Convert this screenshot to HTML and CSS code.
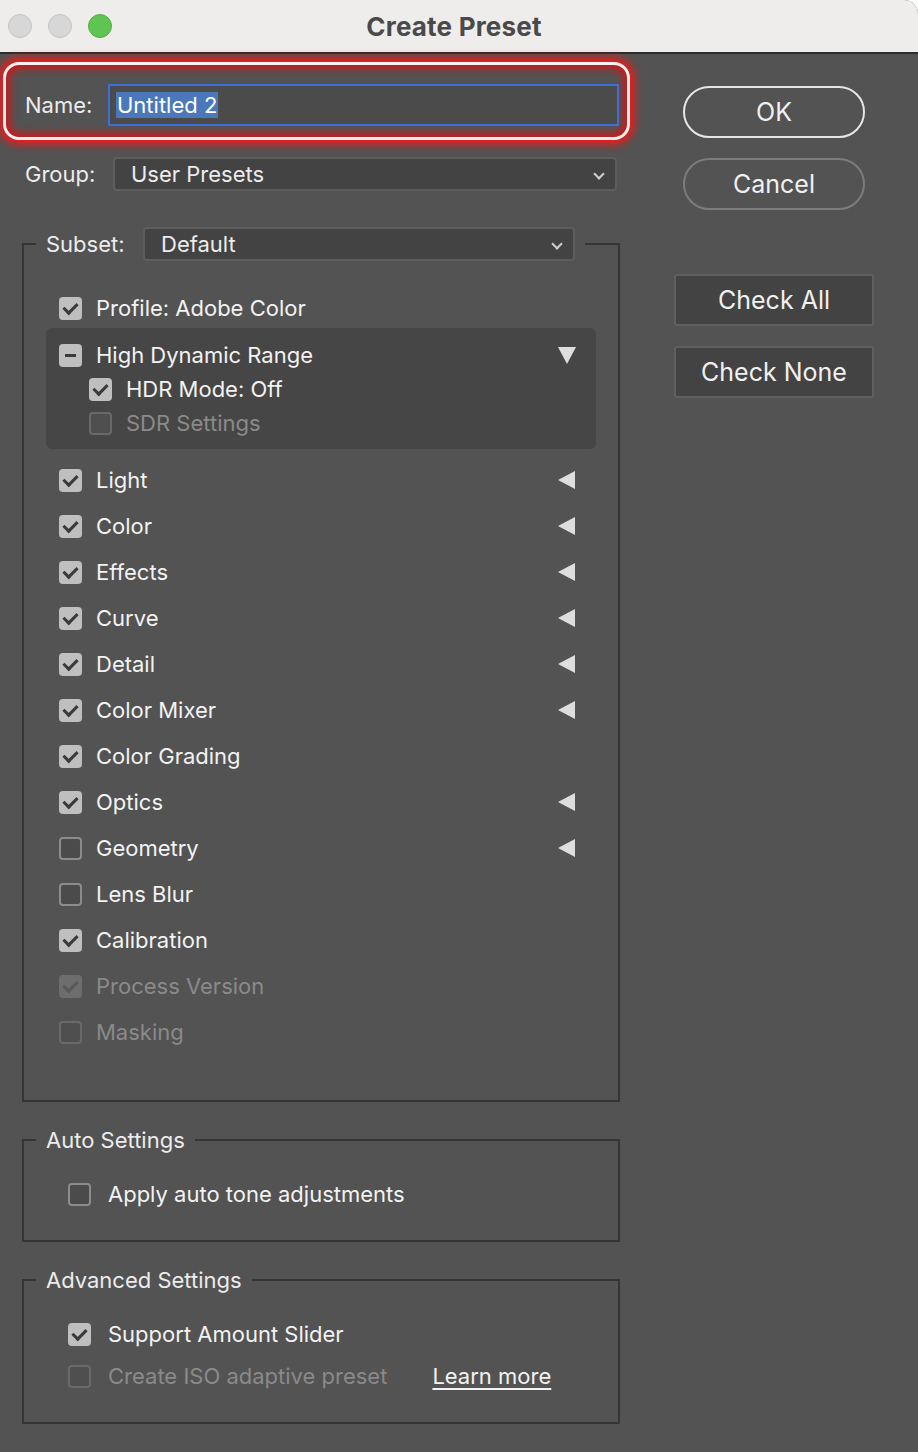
FILE: index.html
```html
<!DOCTYPE html>
<html lang="en">
<head>
    <meta charset="UTF-8">
    <title>Create Preset</title>
    <link rel="stylesheet" href="styles.css">
</head>
<body>
<div class="window">
    <div class="titlebar">
        <div class="lights">
            <span class="light"></span>
            <span class="light"></span>
            <span class="light green"></span>
        </div>
        <div class="title">Create Preset</div>
    </div>

    <div class="content">
        <div class="main">
            <div class="name-row">
                <span class="label name-label">Name:</span>
                <div class="name-input"><span class="selected">Untitled 2</span></div>
            </div>

            <div class="group-row">
                <span class="label group-label">Group:</span>
                <div class="select group-select">User Presets<span class="chevron"></span></div>
            </div>

            <fieldset class="box subset">
                <legend>
                    <span class="label subset-label">Subset:</span>
                    <div class="select subset-select">Default<span class="chevron"></span></div>
                </legend>
                <div class="list">
                    <div class="row first"><span class="cb on"></span>Profile: Adobe Color</div>
                    <div class="hdr">
                        <div class="row"><span class="cb mixed"></span>High Dynamic Range<span class="tri down"></span></div>
                        <div class="row sub"><span class="cb on"></span>HDR Mode: Off</div>
                        <div class="row sub off"><span class="cb"></span>SDR Settings</div>
                    </div>
                    <div class="rows">
                        <div class="row"><span class="cb on"></span>Light<span class="tri"></span></div>
                        <div class="row"><span class="cb on"></span>Color<span class="tri"></span></div>
                        <div class="row"><span class="cb on"></span>Effects<span class="tri"></span></div>
                        <div class="row"><span class="cb on"></span>Curve<span class="tri"></span></div>
                        <div class="row"><span class="cb on"></span>Detail<span class="tri"></span></div>
                        <div class="row"><span class="cb on"></span>Color Mixer<span class="tri"></span></div>
                        <div class="row"><span class="cb on"></span>Color Grading</div>
                        <div class="row"><span class="cb on"></span>Optics<span class="tri"></span></div>
                        <div class="row"><span class="cb"></span>Geometry<span class="tri"></span></div>
                        <div class="row"><span class="cb"></span>Lens Blur</div>
                        <div class="row"><span class="cb on"></span>Calibration</div>
                        <div class="row off"><span class="cb on"></span>Process Version</div>
                        <div class="row off"><span class="cb"></span>Masking</div>
                    </div>
                </div>
            </fieldset>

            <fieldset class="box auto">
                <legend>Auto Settings</legend>
                <div class="opts">
                    <div class="opt"><span class="cb"></span>Apply auto tone adjustments</div>
                </div>
            </fieldset>

            <fieldset class="box advanced">
                <legend>Advanced Settings</legend>
                <div class="opts">
                    <div class="opt"><span class="cb on"></span>Support Amount Slider</div>
                    <div class="opt off"><span class="cb"></span>Create ISO adaptive preset<a class="learn" href="#">Learn more</a></div>
                </div>
            </fieldset>
        </div>

        <div class="side">
            <button class="pill ok">OK</button>
            <button class="pill cancel">Cancel</button>
            <button class="square check-all">Check All</button>
            <button class="square">Check None</button>
        </div>
    </div>
</div>
</body>
</html>
```

FILE: styles.css
```css
body {
    margin: 0;
    background: #ffffff;
    font-family: Inter, "Noto Sans", sans-serif;
}
.window {
    width: 918px;
    height: 1452px;
    background: #535353;
    border-top-right-radius: 14px;
    overflow: hidden;
    color: #f0f0f0;
}
.titlebar {
    height: 52px;
    background: #efedeb;
    border-bottom: 2px solid #2c2c2c;
    display: flex;
    align-items: center;
}
.lights {
    display: flex;
    gap: 16px;
    padding-left: 8px;
}
.light {
    width: 22px;
    height: 22px;
    border-radius: 50%;
    background: #d7d7d7;
    border: 1px solid #c2c2c2;
}
.light.green {
    background: #5fc452;
    border-color: #52ad46;
}
.title {
    flex: 1;
    text-align: center;
    padding-right: 122px;
    font-size: 26px;
    font-weight: 700;
    letter-spacing: 0.2px;
    color: #4a4a4a;
}
.content {
    display: flex;
}
.main {
    width: 640px;
}
.label {
    flex: none;
    font-size: 22px;
    color: #ececec;
}

/* name row (highlighted) */
.name-row {
    box-sizing: border-box;
    margin: 8px 0 0 3px;
    width: 627px;
    height: 78px;
    border: 3px solid #fbeeee;
    border-radius: 16px;
    box-shadow: 0 0 9px 4px #ff1414, inset 0 0 9px 3px #e01010;
    display: flex;
    align-items: center;
    padding: 8px 0 0 19px;
}
.name-label {
    width: 83px;
}
.name-input {
    box-sizing: border-box;
    width: 511px;
    height: 42px;
    border: 2px solid #3d6fd6;
    background: #4b4b4b;
    display: flex;
    align-items: center;
    padding-left: 6px;
}
.selected {
    background: #4b78bb;
    color: #ffffff;
    font-size: 22px;
    line-height: 26px;
    padding: 0 1px;
}

/* selects */
.group-row {
    display: flex;
    align-items: center;
    margin-top: 17px;
    padding-left: 25px;
    height: 34px;
}
.group-label {
    width: 88px;
}
.select {
    box-sizing: border-box;
    height: 34px;
    background: #434343;
    border: 2px solid #5d5d5d;
    border-radius: 4px;
    font-size: 22px;
    color: #ececec;
    display: flex;
    align-items: center;
    padding-left: 16px;
    position: relative;
}
.group-select {
    width: 504px;
}
.subset-label {
    width: 97px;
}
.subset-select {
    width: 432px;
}
.chevron {
    position: absolute;
    right: 12px;
    top: 11px;
    width: 6px;
    height: 6px;
    border: solid #cfcfcf;
    border-width: 0 2px 2px 0;
    transform: rotate(45deg);
}

/* group boxes */
.box {
    margin: 0 0 0 22px;
    width: 598px;
    box-sizing: border-box;
    border: 2px solid #353535;
    padding: 0;
    min-width: 0;
}
.box legend {
    margin-left: 12px;
    padding: 0 10px;
    font-size: 22px;
    line-height: 24px;
    color: #ececec;
}
.subset {
    margin-top: 36px;
}
.subset legend {
    display: flex;
    align-items: center;
}
.list {
    padding: 27px 0 45px;
}
.row {
    display: flex;
    align-items: center;
    height: 46px;
    padding: 0 43px 0 35px;
    font-size: 22px;
    color: #f2f2f2;
}
.row.first {
    height: 40px;
}
.hdr {
    margin: 0 22px;
    padding: 10px 0 9px;
    background: #464646;
    border-radius: 6px;
}
.hdr .row {
    height: 34px;
    padding: 0 20px 0 13px;
}
.hdr .row.sub {
    padding-left: 43px;
}
.rows {
    margin-top: 8px;
}
.off {
    color: #8a8a8a !important;
}

/* checkboxes */
.cb {
    box-sizing: border-box;
    flex: none;
    width: 23px;
    height: 23px;
    border-radius: 4px;
    border: 2px solid #8c8c8c;
    background: #4b4b4b;
    margin-right: 14px;
    position: relative;
}
.cb.on, .cb.mixed {
    border: none;
    background: #bfbfbf;
}
.cb.on::after {
    content: "";
    position: absolute;
    left: 7px;
    top: 3px;
    width: 6px;
    height: 11px;
    border: solid #3a3a3a;
    border-width: 0 3.5px 3.5px 0;
    transform: rotate(45deg);
}
.cb.mixed::after {
    content: "";
    position: absolute;
    left: 6px;
    top: 10px;
    width: 11px;
    height: 3px;
    background: #3b3b3b;
}
.off .cb {
    border-color: #696969;
    background: #4f4f4f;
}
.off .cb.on {
    background: #6d6d6d;
}
.off .cb.on::after {
    border-color: #585858;
}

/* disclosure triangles */
.tri {
    margin-left: auto;
    width: 0;
    height: 0;
    border-top: 9px solid transparent;
    border-bottom: 9px solid transparent;
    border-right: 17px solid #dedede;
}
.tri.down {
    border-top: 17px solid #dedede;
    border-left: 9px solid transparent;
    border-right: 9px solid transparent;
    border-bottom: none;
}

/* lower boxes */
.auto {
    margin-top: 26px;
}
.advanced {
    margin-top: 26px;
}
.opts {
    padding: 22px 0 26px 44px;
}
.advanced .opts {
    padding: 21px 0 25px 44px;
}
.opt {
    display: flex;
    align-items: center;
    height: 40px;
    font-size: 22px;
    color: #f2f2f2;
}
.advanced .opt {
    height: 42px;
}
.opt .cb {
    margin-right: 17px;
}
.learn {
    margin-left: 45px;
    color: #f2f2f2;
    text-decoration: underline;
    text-underline-offset: 4px;
}

/* side buttons */
.side {
    display: flex;
    flex-direction: column;
    align-items: flex-start;
    padding-top: 32px;
}
button {
    font-family: Inter, "Noto Sans", sans-serif;
    font-size: 25px;
    color: #f0f0f0;
    cursor: pointer;
}
.pill {
    margin-left: 43px;
    width: 182px;
    height: 52px;
    border-radius: 26px;
    background: transparent;
    border: 2px solid #e6e6e6;
}
.pill.cancel {
    margin-top: 20px;
    border-color: #7c7c7c;
}
.square {
    margin: 20px 0 0 34px;
    width: 200px;
    height: 52px;
    border-radius: 3px;
    background: #434343;
    border: 2px solid #5f5f5f;
}
.square.check-all {
    margin-top: 64px;
}
```
